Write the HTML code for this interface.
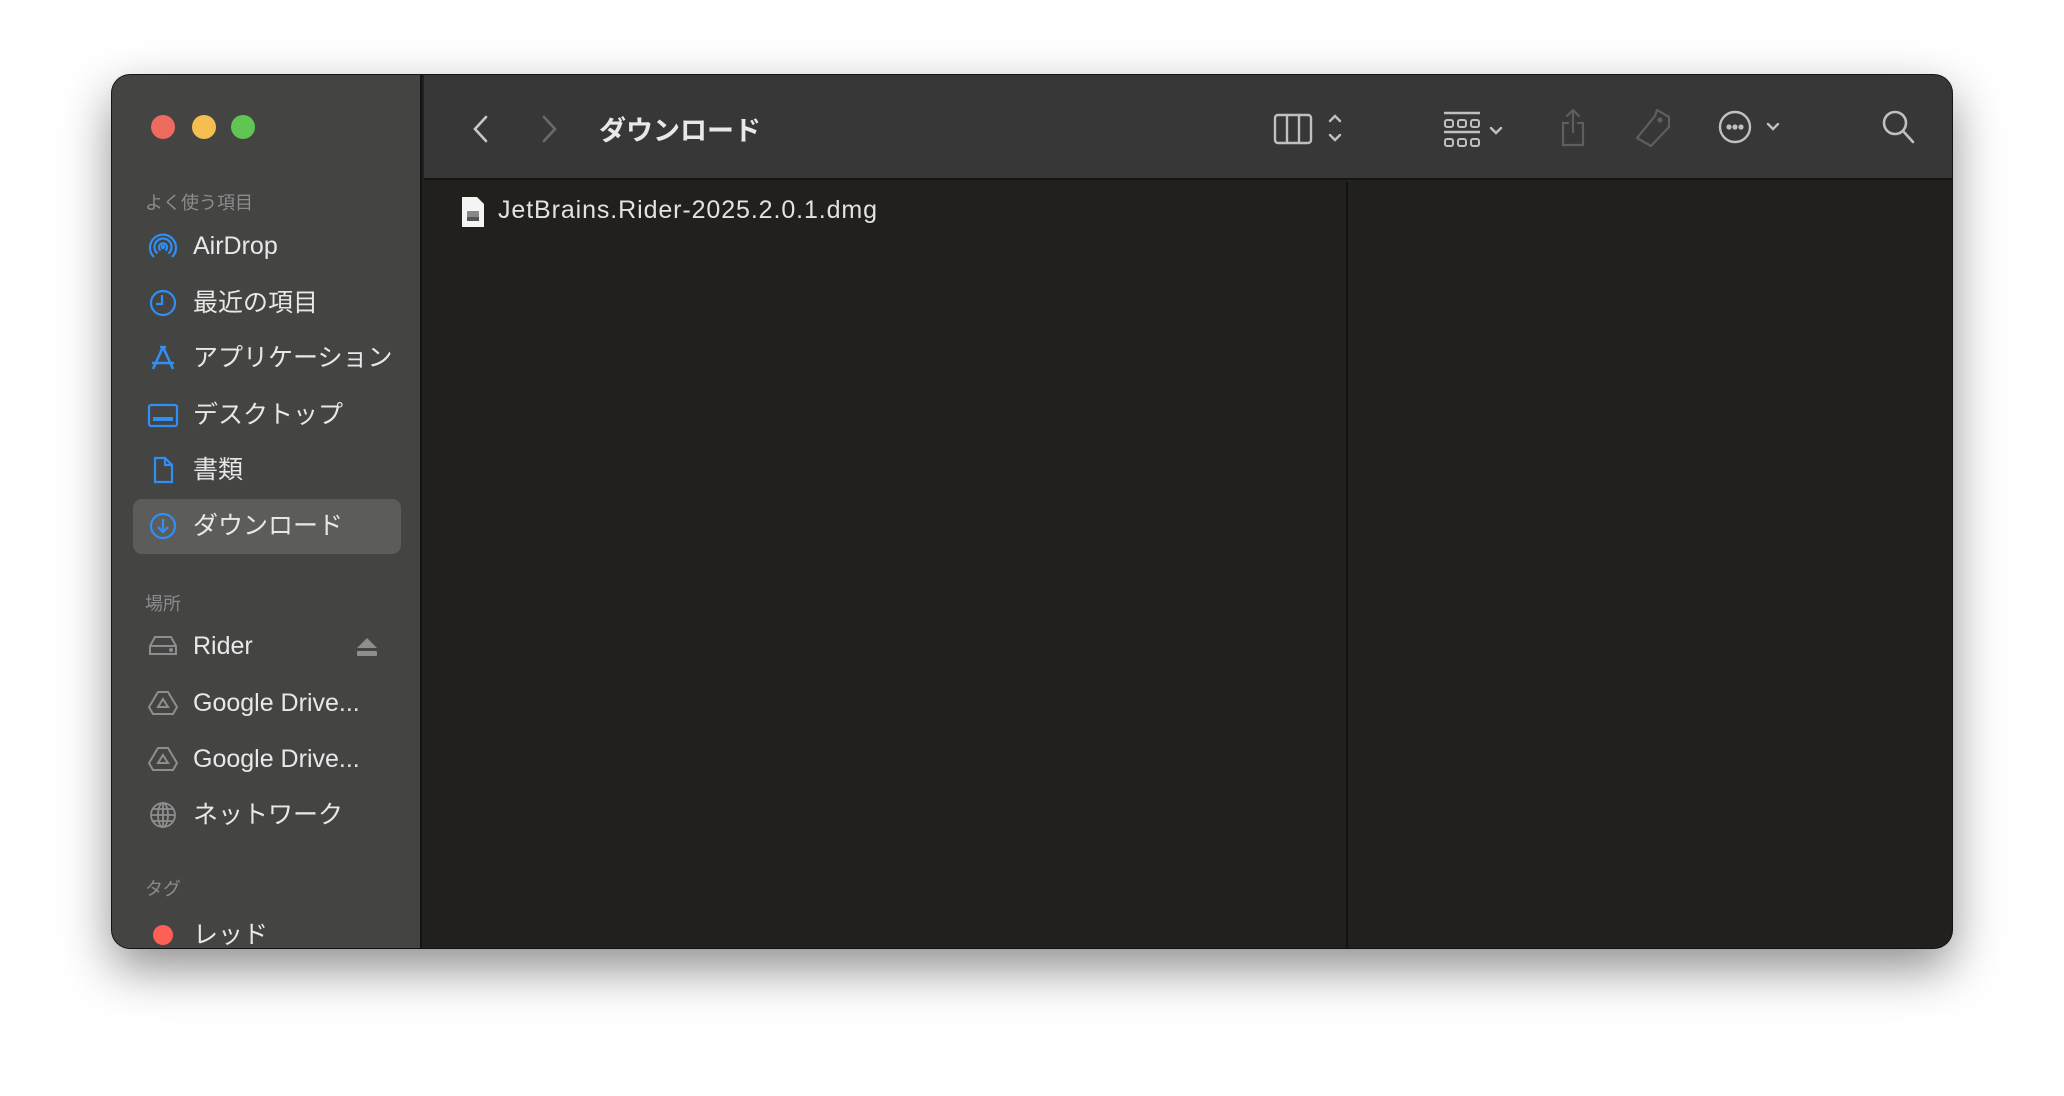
<!DOCTYPE html>
<html><head><meta charset="utf-8">
<style>
*{margin:0;padding:0;box-sizing:border-box}
body{width:2064px;height:1096px;background:#fff;position:relative;overflow:hidden;font-family:"Liberation Sans","Noto Sans CJK JP",sans-serif}
.win{position:absolute;left:112px;top:75px;width:1840px;height:873px;border-radius:18px;overflow:hidden;background:#21201d;box-shadow:0 20px 50px rgba(0,0,0,.45),0 0 0 1px #1a1a1a;}
.side{position:absolute;left:0;top:0;width:310px;height:100%;background:#444443;border-right:2px solid #141414}
.tb{position:absolute;left:312px;top:0;right:0;height:105px;background:#373737;border-bottom:2px solid #141414}
.div{position:absolute;left:1234px;top:107px;bottom:0;width:2px;background:#111}
.dot{position:absolute;top:116px;width:24px;height:24px;border-radius:50%}
.hdr{position:absolute;left:33px;font-size:18px;color:#8c8c8c}
.it{position:absolute;left:81px;font-size:25px;color:#e8e8e8;line-height:30px}
.ic{position:absolute;left:36px;width:30px;height:30px}
.sel{position:absolute;left:21px;top:424px;width:268px;height:55px;border-radius:9px;background:#5c5c5b}
svg{overflow:visible}
</style></head><body>
<div class="win">
 <div class="side">
  <div class="dot" style="left:39px;top:40px;background:#ec6a5e"></div>
  <div class="dot" style="left:80px;top:40px;background:#f4bf4f"></div>
  <div class="dot" style="left:119px;top:40px;background:#61c554"></div>
  <div class="hdr" style="top:114px">よく使う項目</div>
  <div class="sel"></div>
  <svg class="ic" style="top:157px" viewBox="0 0 30 30" fill="none" stroke="#2f8ff5" stroke-width="2.2"><path d="M6 25A13 13 0 1 1 24 25"/><path d="M9.5 21.5A8.5 8.5 0 1 1 20.5 21.5"/><path d="M12.5 18.5A4 4 0 1 1 17.5 18.5"/><circle cx="15" cy="15" r="1" fill="#2f8ff5"/></svg>
  <div class="it" style="top:156px">AirDrop</div>
  <svg class="ic" style="top:213px" viewBox="0 0 30 30" fill="none" stroke="#2f8ff5" stroke-width="2.2"><circle cx="15" cy="15" r="12"/><path d="M14 7v9h-6"/></svg>
  <div class="it" style="top:213px">最近の項目</div>
  <svg class="ic" style="top:268px" viewBox="0 0 30 30" fill="none" stroke="#2f8ff5" stroke-width="2.6"><path d="M15 4L5 26M15 4l10 22M4 20h22M12 4h6"/></svg>
  <div class="it" style="top:268px">アプリケーション</div>
  <svg class="ic" style="top:325px" viewBox="0 0 30 30" fill="none" stroke="#2f8ff5" stroke-width="2.2"><rect x="1" y="5" width="28" height="21" rx="2"/><rect x="5" y="17" width="20" height="4" fill="#2f8ff5" stroke="none"/></svg>
  <div class="it" style="top:325px">デスクトップ</div>
  <svg class="ic" style="top:380px" viewBox="0 0 30 30" fill="none" stroke="#2f8ff5" stroke-width="2.2"><path d="M7 3h10l7 7v17H7z"/><path d="M17 3v7h7"/></svg>
  <div class="it" style="top:380px">書類</div>
  <svg class="ic" style="top:436px" viewBox="0 0 30 30" fill="none" stroke="#2f8ff5" stroke-width="2.2"><circle cx="15" cy="15" r="12"/><path d="M15 8v13M10 16l5 5 5-5"/></svg>
  <div class="it" style="top:436px">ダウンロード</div>
  <div class="hdr" style="top:515px">場所</div>
  <svg class="ic" style="top:556px" viewBox="0 0 30 30" fill="none" stroke="#8e8e8e" stroke-width="2"><path d="M2 15L7 6h16l5 9v8H2z"/><path d="M2 15h26"/><circle cx="23" cy="19" r="1" fill="#8e8e8e"/></svg>
  <div class="it" style="top:556px">Rider</div>
  <svg style="position:absolute;left:245px;top:563px;width:20px;height:18px" viewBox="0 0 20 18" fill="#8e8e8e"><path d="M10 0L20 10H0z"/><rect x="0" y="13" width="20" height="5" rx="1"/></svg>
  <svg class="ic" style="top:613px" viewBox="0 0 30 30" fill="none" stroke="#8e8e8e" stroke-width="2"><path d="M10 4h10l9 15-4 7H5l-4-7z"/><path d="M15 11l5 8H10z"/></svg>
  <div class="it" style="top:613px">Google Drive...</div>
  <svg class="ic" style="top:669px" viewBox="0 0 30 30" fill="none" stroke="#8e8e8e" stroke-width="2"><path d="M10 4h10l9 15-4 7H5l-4-7z"/><path d="M15 11l5 8H10z"/></svg>
  <div class="it" style="top:669px">Google Drive...</div>
  <svg class="ic" style="top:725px" viewBox="0 0 30 30" fill="none" stroke="#8e8e8e" stroke-width="1.8"><circle cx="15" cy="15" r="12"/><ellipse cx="15" cy="15" rx="5" ry="12"/><path d="M3 15h24M5 9h20M5 21h20M15 3v24"/></svg>
  <div class="it" style="top:725px">ネットワーク</div>
  <div class="hdr" style="top:800px">タグ</div>
  <div style="position:absolute;left:41px;top:850px;width:20px;height:20px;border-radius:50%;background:#fe5f57"></div>
  <div class="it" style="top:845px">レッド</div>
 </div>
 <div class="tb">
  <svg style="position:absolute;left:48px;top:40px" width="16" height="28" viewBox="0 0 16 28" fill="none" stroke="#c8c8c8" stroke-width="2.6" stroke-linecap="round"><path d="M14 2L3 14l11 12"/></svg>
  <svg style="position:absolute;left:118px;top:40px" width="16" height="28" viewBox="0 0 16 28" fill="none" stroke="#6a6a6a" stroke-width="2.6" stroke-linecap="round"><path d="M2 2l11 12L2 26"/></svg>
  <div style="position:absolute;left:175px;top:34px;font-size:27px;font-weight:bold;color:#e8e8e8">ダウンロード</div>
  <svg style="position:absolute;left:850px;top:37px" width="80" height="32" viewBox="0 0 80 32" fill="none" stroke="#c0c0c0" stroke-width="2.4" stroke-linecap="round"><rect x="1" y="3" width="36" height="28" rx="3"/><path d="M13 3v28M25 3v28M56 9l5-5 5 5M56 23l5 5 5-5"/></svg>
  <svg style="position:absolute;left:1020px;top:37px" width="70" height="36" viewBox="0 0 70 36" fill="none" stroke="#c0c0c0" stroke-width="2"><path d="M0 1h36M0 20h36" stroke-width="2.4"/><rect x="1" y="8" width="8" height="7" rx="2"/><rect x="14" y="8" width="8" height="7" rx="2"/><rect x="27" y="8" width="8" height="7" rx="2"/><rect x="1" y="27" width="8" height="7" rx="2"/><rect x="14" y="27" width="8" height="7" rx="2"/><rect x="27" y="27" width="8" height="7" rx="2"/><path d="M47 16l5 5 5-5" stroke-width="2.4" stroke-linecap="round"/></svg>
  <svg style="position:absolute;left:1137px;top:33px" width="24" height="38" viewBox="0 0 24 38" fill="none" stroke="#5e5e5e" stroke-width="2.2" stroke-linecap="round"><path d="M12 2v22M6 8l6-6 6 6M7 15H2v22h20V15h-5"/></svg>
  <svg style="position:absolute;left:1211px;top:33px" width="36" height="40" viewBox="0 0 36 40" fill="none" stroke="#5e5e5e" stroke-width="2.2"><path d="M22 2l12 7v10L16 38 2 30 20 8z" stroke-linejoin="round"/><circle cx="25" cy="12" r="1.5" fill="#5e5e5e"/></svg>
  <svg style="position:absolute;left:1294px;top:34px" width="70" height="36" viewBox="0 0 70 36" fill="none" stroke="#c0c0c0" stroke-width="2.4"><circle cx="17" cy="18" r="15"/><circle cx="11" cy="18" r="1.4" fill="#c0c0c0"/><circle cx="17" cy="18" r="1.4" fill="#c0c0c0"/><circle cx="23" cy="18" r="1.4" fill="#c0c0c0"/><path d="M50 15l5 5 5-5" stroke-linecap="round"/></svg>
  <svg style="position:absolute;left:1457px;top:34px" width="36" height="38" viewBox="0 0 36 38" fill="none" stroke="#c0c0c0" stroke-width="2.6" stroke-linecap="round"><circle cx="14" cy="14" r="11"/><path d="M22 22l10 11"/></svg>
 </div>
 <div class="div"></div>
 <svg style="position:absolute;left:349px;top:122px" width="24" height="30" viewBox="0 0 24 30"><path d="M1 0h15l7 7v23H1z" fill="#f4f4f4"/><rect x="6" y="14" width="12" height="10" rx="1" fill="#888"/><rect x="6" y="20" width="12" height="4" fill="#555"/></svg>
 <div style="position:absolute;left:386px;top:121px;font-size:25px;color:#e2e2e2;letter-spacing:0.9px">JetBrains.Rider-2025.2.0.1.dmg</div>
</div>
</body></html>
